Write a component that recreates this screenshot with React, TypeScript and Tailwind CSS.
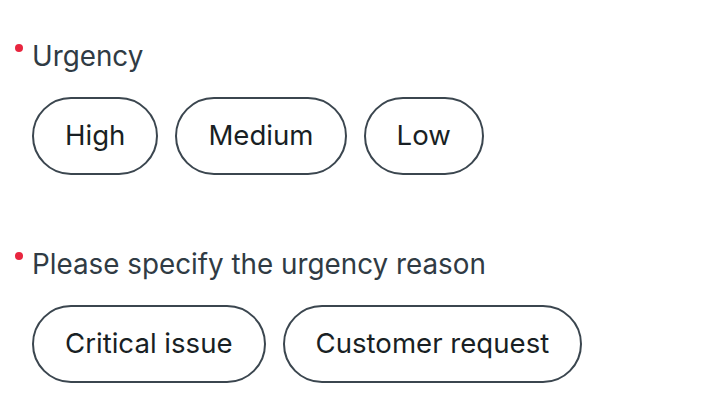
const sections = [
  { label: 'Urgency', options: ['High', 'Medium', 'Low'] },
  { label: 'Please specify the urgency reason', options: ['Critical issue', 'Customer request'] },
];

export default function App() {
  return (
    <div className="min-h-[416px] w-[722px] bg-white pt-[40px] font-['Inter',sans-serif]">
      {sections.map((s, i) => (
        <div key={s.label} className={i > 0 ? 'mt-[73px]' : ''}>
          <div className="flex items-start pl-[15px]">
            <span className="mt-[4px] h-[8px] w-[8px] shrink-0 rounded-full bg-[#e8263f]" />
            <span className="ml-[9px] text-[27.8px] leading-[32px] text-[#303b44]">{s.label}</span>
          </div>
          <div className="mt-[25px] flex gap-[17px] pl-[32px]">
            {s.options.map((o) => (
              <button
                key={o}
                className="h-[78px] rounded-full border-2 border-[#3b464f] px-[31px] text-[27.6px] text-[#191f24]"
              >
                {o}
              </button>
            ))}
          </div>
        </div>
      ))}
    </div>
  );
}
